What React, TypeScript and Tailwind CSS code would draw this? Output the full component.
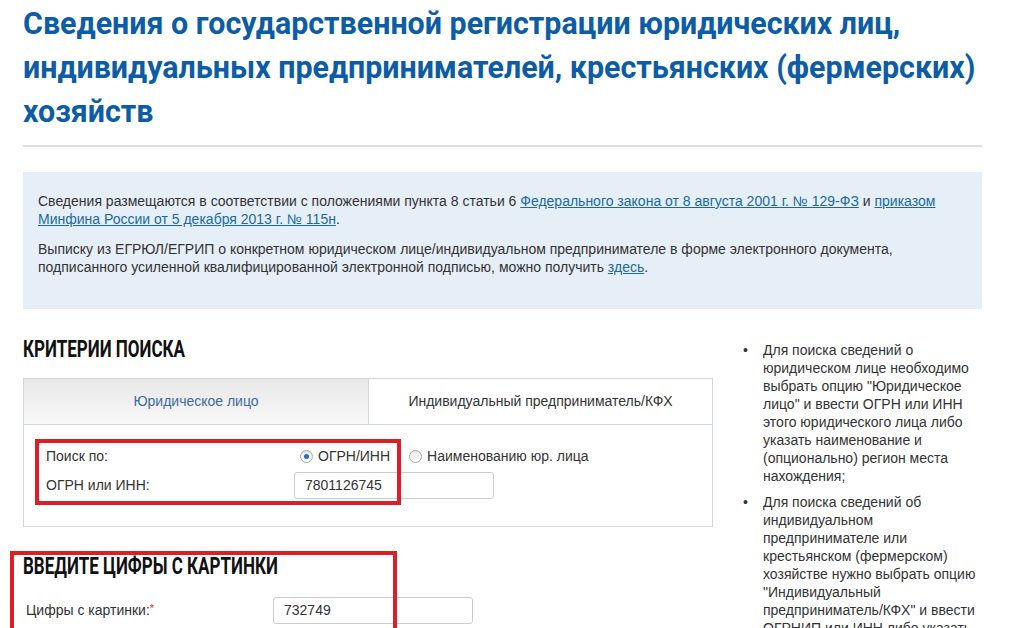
import React from 'react';

// узкий жирный шрифт заголовков имитируем через Roboto + сжатие по горизонтали
const cond = "font-['Roboto',sans-serif] font-bold whitespace-nowrap origin-left";

function Radio({ checked }: { checked?: boolean }) {
    return (
        <span className="relative inline-flex items-center justify-center w-[13px] h-[13px] rounded-full border border-[#a9a9a9] bg-gradient-to-b from-[#e6e6e6] to-white shrink-0">
            {checked && <span className="w-[5px] h-[5px] rounded-full bg-[#2b6cb0]" />}
        </span>
    );
}

const notes = [
    'Для поиска сведений о юридическом лице необходимо выбрать опцию "Юридическое лицо" и ввести ОГРН или ИНН этого юридического лица либо указать наименование и (опционально) регион места нахождения;',
    'Для поиска сведений об индивидуальном предпринимателе или крестьянском (фермерском) хозяйстве нужно выбрать опцию "Индивидуальный предприниматель/КФХ" и ввести ОГРНИП или ИНН либо указать фамилию, имя, отчество и (опционально) регион места жительства;',
];

export default function App() {
    return (
        <div className="w-[1026px] h-[628px] overflow-hidden bg-white text-[#333] font-['Liberation_Sans',Arial,sans-serif]">
            <div className="pl-[23px] w-[982px]">
                {/* заголовок */}
                <h1 className="pt-[1px] text-[32px] leading-[44px] text-[#0d5ca7]">
                    <span className={`${cond} block scale-x-[0.95]`}>Сведения о государственной регистрации юридических лиц,</span>
                    <span className={`${cond} block scale-x-[0.95]`}>индивидуальных предпринимателей, крестьянских (фермерских)</span>
                    <span className={`${cond} block scale-x-[0.95]`}>хозяйств</span>
                </h1>
                <div className="mt-[12px] h-[2px] bg-[#dedede]" />

                {/* инфо-блок */}
                <div className="mt-[25px] bg-[#e6eef8] pl-[15px] pr-[25px] pt-[20px] pb-[33px] text-[14px] leading-[18px]">
                    <p>
                        Сведения размещаются в соответствии с положениями пункта 8 статьи 6{' '}
                        <a className="text-[#1a6aa0] underline">Федерального закона от 8 августа 2001 г. № 129-ФЗ</a> и{' '}
                        <a className="text-[#1a6aa0] underline">приказом Минфина России от 5 декабря 2013 г. № 115н</a>.
                    </p>
                    <p className="mt-[12px]">
                        Выписку из ЕГРЮЛ/ЕГРИП о конкретном юридическом лице/индивидуальном предпринимателе в форме электронного документа, подписанного усиленной квалифицированной электронной подписью, можно получить{' '}
                        <a className="text-[#1a6aa0] underline">здесь</a>.
                    </p>
                </div>

                <div className="flex">
                    {/* левая колонка */}
                    <div className="w-[690px] shrink-0">
                        <h2 className={`${cond} mt-[28px] text-[23px] leading-[26px] text-[#111] scale-x-[0.74]`}>КРИТЕРИИ ПОИСКА</h2>

                        <div className="mt-[15px] border border-[#cfd6dc]">
                            <div className="flex h-[46px] border-b border-[#cfd6dc] text-[14px]">
                                <div className="w-[345px] flex items-center justify-center bg-gradient-to-b from-[#e7e7e7] to-[#f9f9f9] border-r border-[#cfd6dc] text-[#3e6a9c]">
                                    Юридическое лицо
                                </div>
                                <div className="flex-1 flex items-center justify-center bg-white">
                                    Индивидуальный предприниматель/КФХ
                                </div>
                            </div>

                            <div className="relative pl-[22px] pt-[21px] pb-[27px] text-[14px]">
                                <div className="flex items-center h-[20px]">
                                    <span className="w-[248px]">Поиск по:</span>
                                    <label className="ml-[6px] flex items-center gap-[5px]">
                                        <Radio checked />
                                        ОГРН/ИНН
                                    </label>
                                    <label className="ml-[19px] flex items-center gap-[5px]">
                                        <Radio />
                                        Наименованию юр. лица
                                    </label>
                                </div>
                                <div className="flex items-center mt-[6px]">
                                    <span className="w-[248px]">ОГРН или ИНН:</span>
                                    <div className="w-[200px] h-[27px] border border-[#ccc] rounded-[3px] bg-white pl-[10px] flex items-center">
                                        7801126745
                                    </div>
                                </div>
                                {/* красная рамка-пометка */}
                                <div className="absolute left-[11px] top-[14px] w-[366px] h-[66px] border-4 border-[#dc1f26] pointer-events-none" />
                            </div>
                        </div>

                        <div className="relative pt-[27px]">
                            <h2 className={`${cond} text-[23px] leading-[26px] text-[#111] scale-x-[0.74]`}>ВВЕДИТЕ ЦИФРЫ С КАРТИНКИ</h2>
                            <div className="flex items-center mt-[17px] text-[14px]">
                                <span className="w-[250px] pl-[3px]">
                                    Цифры с картинки:<span className="text-[#dc1f26] align-top text-[11px]">*</span>
                                </span>
                                <div className="w-[200px] h-[27px] border border-[#ccc] rounded-[3px] bg-white pl-[10px] flex items-center">
                                    732749
                                </div>
                            </div>
                            <div className="absolute left-[-13px] top-[24px] w-[387px] h-[90px] border-4 border-[#dc1f26] pointer-events-none" />
                        </div>
                    </div>

                    {/* правая колонка */}
                    <ul className="ml-[27px] pt-[32px] text-[14px] leading-[18px] text-[#333]">
                        {notes.map((n, i) => (
                            <li key={i} className={`flex ${i > 0 ? 'mt-[8px]' : ''}`}>
                                <span className="w-[23px] shrink-0 pl-[3px]">•</span>
                                <span className="w-[222px]">{n}</span>
                            </li>
                        ))}
                    </ul>
                </div>
            </div>
        </div>
    );
}
